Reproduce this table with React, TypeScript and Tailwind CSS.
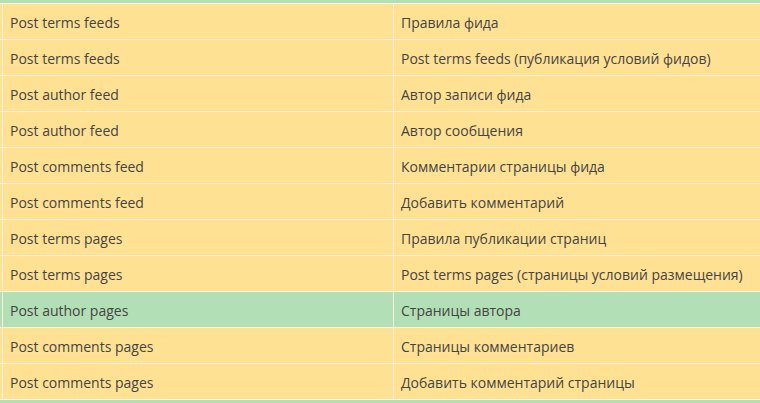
const rows: { en: string; ru: string; green?: boolean }[] = [
  { en: 'Post terms feeds', ru: 'Правила фида' },
  { en: 'Post terms feeds', ru: 'Post terms feeds (публикация условий фидов)' },
  { en: 'Post author feed', ru: 'Автор записи фида' },
  { en: 'Post author feed', ru: 'Автор сообщения' },
  { en: 'Post comments feed', ru: 'Комментарии страницы фида' },
  { en: 'Post comments feed', ru: 'Добавить комментарий' },
  { en: 'Post terms pages', ru: 'Правила публикации страниц' },
  { en: 'Post terms pages', ru: 'Post terms pages (страницы условий размещения)' },
  { en: 'Post author pages', ru: 'Страницы автора', green: true },
  { en: 'Post comments pages', ru: 'Страницы комментариев' },
  { en: 'Post comments pages', ru: 'Добавить комментарий страницы' },
];

export default function App() {
  return (
    <div
      className="w-[760px] h-[403px] overflow-hidden bg-[#b3dfb6] pt-[3px] text-[14px] text-[#444]"
      style={{ fontFamily: '"Open Sans", "Noto Sans", sans-serif' }}
    >
      {rows.map((r, i) => (
        <div
          key={i}
          className={`flex h-[36px] border-t border-[#fdf3dc] pl-[2px] ${
            r.green ? 'bg-[#b3dfb6]' : 'bg-[#ffe194]'
          }`}
        >
          <div className="flex w-[391px] items-center border-l border-[#fdf3dc] pl-[7px] pt-[2px]">
            {r.en}
          </div>
          <div className="flex flex-1 items-center border-l border-[#fdf3dc] pl-[7px] pt-[2px]">
            {r.ru}
          </div>
        </div>
      ))}
      <div className="h-[1px] bg-[#fdf3dc]" />
    </div>
  );
}
